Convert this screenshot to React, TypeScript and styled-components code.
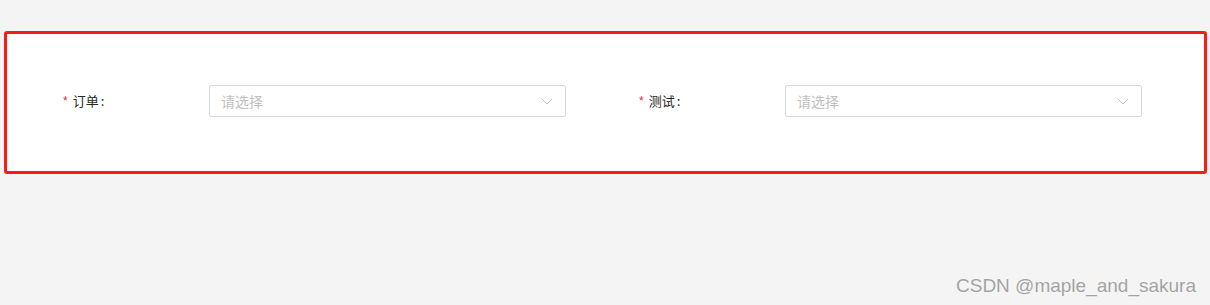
import styled, { createGlobalStyle } from 'styled-components'

const GlobalStyle = createGlobalStyle`
  html,
  body {
    margin: 0;
    padding: 0;
    background-color: #f4f4f4;
    font-family: 'Noto Sans CJK SC', 'Liberation Sans', sans-serif;
  }
`

const Page = styled.div`
  position: relative;
  height: 305px;
  padding: 31px 3px 0 4px;
  box-sizing: border-box;
`

const FormCard = styled.div`
  background-color: #fff;
  border: 3px solid #fa1c14;
  border-radius: 3px;
  padding: 51px 0 54px 56px;
`

const FormRow = styled.div`
  display: flex;
  align-items: center;
`

const FormItem = styled.div`
  width: 576px;
  flex-shrink: 0;
  display: flex;
  align-items: center;
`

const Label = styled.label`
  width: 146px;
  flex-shrink: 0;
  display: flex;
  align-items: center;
  font-size: 13px;
  color: #262626;
  line-height: 32px;
`

const Required = styled.span`
  color: #f5222d;
  font-family: 'Liberation Sans', sans-serif;
  font-size: 12px;
  margin-right: 5px;
`

const Colon = styled.span`
  margin-left: 2px;
`

const Select = styled.div`
  width: 357px;
  height: 32px;
  box-sizing: border-box;
  border: 1px solid #d9d9d9;
  border-radius: 2px;
  display: flex;
  align-items: center;
  justify-content: space-between;
  padding: 0 12px 0 11px;
  cursor: pointer;
`

const Placeholder = styled.span`
  font-size: 14px;
  color: #bfbfbf;
`

const Watermark = styled.div`
  position: absolute;
  right: 14px;
  bottom: 8px;
  font-family: 'Liberation Sans', Arial, sans-serif;
  font-size: 19px;
  color: #a3a3a3;
  text-shadow: 0 0 1px #fff;
`

const Chevron = () => (
  <svg width="12" height="7" viewBox="0 0 12 7" fill="none">
    <path d="M1 1l5 5 5-5" stroke="#bfbfbf" strokeWidth="1" />
  </svg>
)

const Field = ({ label }: { label: string }) => (
  <FormItem>
    <Label>
      <Required>*</Required>
      {label}
      <Colon>:</Colon>
    </Label>
    <Select>
      <Placeholder>请选择</Placeholder>
      <Chevron />
    </Select>
  </FormItem>
)

export default function App() {
  return (
    <>
      <GlobalStyle />
      <Page>
        <FormCard>
          <FormRow>
            <Field label="订单" />
            <Field label="测试" />
          </FormRow>
        </FormCard>
        <Watermark>CSDN @maple_and_sakura</Watermark>
      </Page>
    </>
  )
}
